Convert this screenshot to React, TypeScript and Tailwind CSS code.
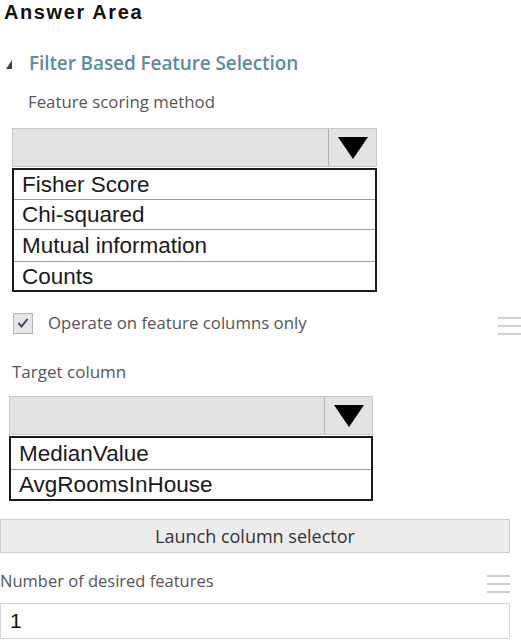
import React from 'react';

const segoe = { fontFamily: '"Open Sans", "Noto Sans", sans-serif' };
const arial = { fontFamily: '"Liberation Sans", Arial, sans-serif' };

function Hamburger({ className }: { className?: string }) {
  return (
    <div className={`flex flex-col gap-[6px] w-[23px] ${className ?? ''}`}>
      <div className="h-[2px] bg-[#cfcfcf]" />
      <div className="h-[2px] bg-[#cfcfcf]" />
      <div className="h-[2px] bg-[#cfcfcf]" />
    </div>
  );
}

function Dropdown({ items, rowHeights }: { items: string[]; rowHeights: string[] }) {
  return (
    <div className="w-full">
      <div className="flex h-[39px] bg-[#e3e3e3] border border-[#c9c9c9]">
        <div className="flex-1" />
        <div className="w-[48px] border-l border-[#b3b3b3] flex items-center justify-center">
          <svg width="30" height="22" viewBox="0 0 30 22">
            <polygon points="0,0 30,0 15,22" fill="#000" />
          </svg>
        </div>
      </div>
      <div className="border-2 border-[#1a1a1a] mt-[1px]">
        {items.map((item, i) => (
          <div
            key={item}
            className={`${rowHeights[i]} flex items-center pl-[8px] pt-[2px] text-[22.5px] text-[#1a1a1a] leading-none ${
              i < items.length - 1 ? 'border-b border-[#9a9a9a]' : ''
            }`}
            style={arial}
          >
            {item}
          </div>
        ))}
      </div>
    </div>
  );
}

export default function App() {
  return (
    <div className="w-[521px] h-[640px] bg-white overflow-hidden">
      <div
        className="pl-[4px] h-[24px] text-[20px] font-bold tracking-[1.6px] text-[#111] leading-[24px]"
        style={arial}
      >
        Answer Area
      </div>

      <div className="mt-[28px] flex items-center h-[22px]" style={segoe}>
        <svg width="6" height="9" viewBox="0 0 6 9" className="ml-[6px] mt-[2px]">
          <polygon points="6,0 6,9 0,9" fill="#444" />
        </svg>
        <span className="ml-[17px] text-[19px] font-semibold text-[#5b8d9b] tracking-[-0.1px]">
          Filter Based Feature Selection
        </span>
      </div>

      <div className="mt-[17px] ml-[28px] text-[16.8px] text-[#555] leading-[22px]" style={segoe}>
        Feature scoring method
      </div>

      <div className="mt-[15px] ml-[12px] w-[365px]">
        <Dropdown
          items={['Fisher Score', 'Chi-squared', 'Mutual information', 'Counts']}
          rowHeights={['h-[30px]', 'h-[30px]', 'h-[32px]', 'h-[28px]']}
        />
      </div>

      <div className="mt-[20px] flex items-center h-[22px]" style={segoe}>
        <div className="ml-[13px] w-[20px] h-[21px] bg-[#e6e6e6] border border-[#b5b5b5] flex items-center justify-center">
          <svg width="12" height="10" viewBox="0 0 12 10">
            <polyline points="1.5,5 4.5,8.5 10.5,1" fill="none" stroke="#3a4a66" strokeWidth="2" />
          </svg>
        </div>
        <span className="ml-[15px] text-[16.8px] text-[#555]">Operate on feature columns only</span>
        <Hamburger className="ml-auto mt-[6px]" />
      </div>

      <div className="mt-[27px] ml-[12px] text-[17px] text-[#555] leading-[22px]" style={segoe}>
        Target column
      </div>

      <div className="mt-[13px] ml-[9px] w-[364px]">
        <Dropdown items={['MedianValue', 'AvgRoomsInHouse']} rowHeights={['h-[32px]', 'h-[29px]']} />
      </div>

      <div className="w-[510px]">
        <button
          className="mt-[18px] w-full h-[34px] bg-[#ececec] border border-[#d0d0d0] text-[18px] text-[#333]"
          style={segoe}
        >
          Launch column selector
        </button>

        <div className="mt-[17px] flex items-center h-[22px]" style={segoe}>
          <span className="text-[16.5px] text-[#555]">Number of desired features</span>
          <Hamburger className="ml-auto mt-[6px]" />
        </div>

        <div
          className="mt-[11px] h-[36px] border border-[#d8d8d8] flex items-center pl-[9px] text-[21px] text-[#111]"
          style={arial}
        >
          1
        </div>
      </div>
    </div>
  );
}
